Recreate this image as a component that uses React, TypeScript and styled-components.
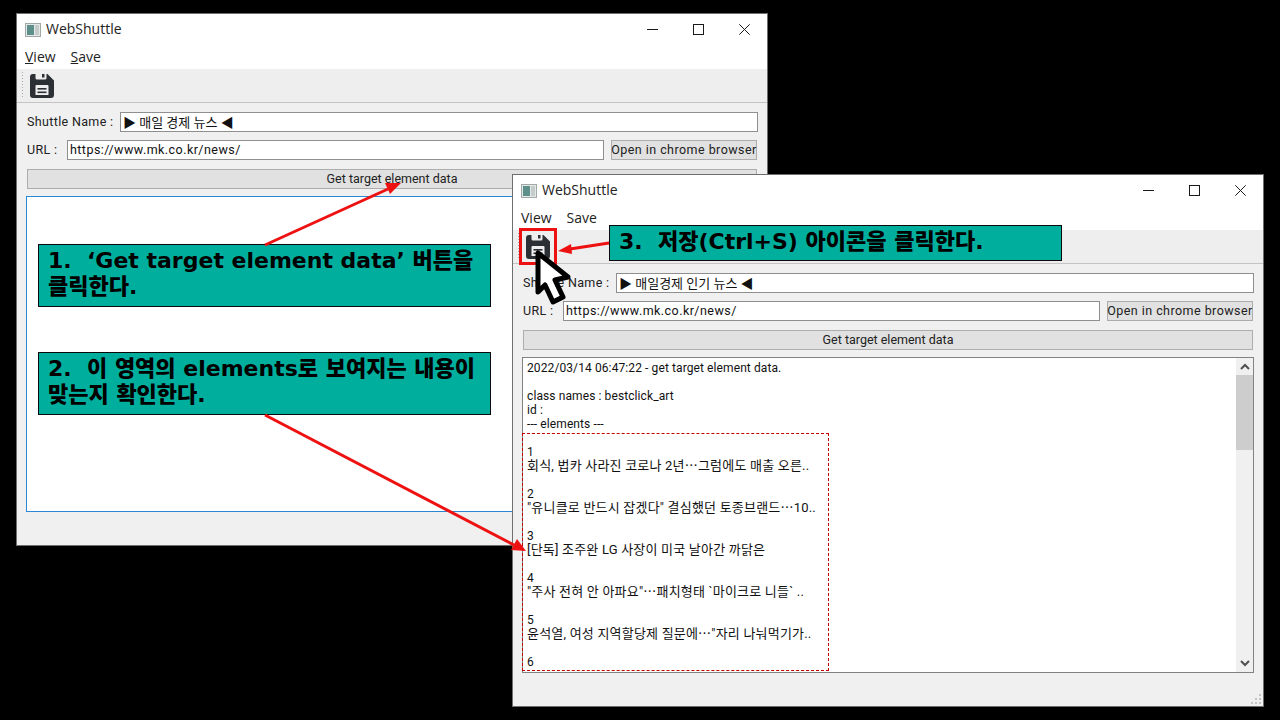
import React from "react";
import styled, { createGlobalStyle } from "styled-components";

const UI_FONT = `"Roboto", "Noto Sans CJK KR", sans-serif`;

const GlobalStyle = createGlobalStyle`
    html, body {
        margin: 0;
        width: 1280px;
        height: 720px;
        overflow: hidden;
        background: #000;
    }
`;

const LOG_LINES = [
    "2022/03/14 06:47:22 - get target element data.",
    "",
    "class names : bestclick_art",
    "id :",
    "--- elements ---",
    "",
    "1",
    "회식, 법카 사라진 코로나 2년⋯그럼에도 매출 오른..",
    "",
    "2",
    "\"유니클로 반드시 잡겠다\" 결심했던 토종브랜드⋯10..",
    "",
    "3",
    "[단독] 조주완 LG 사장이 미국 날아간 까닭은",
    "",
    "4",
    "\"주사 전혀 안 아파요\"⋯패치형태 `마이크로 니들` ..",
    "",
    "5",
    "윤석열, 여성 지역할당제 질문에⋯\"자리 나눠먹기가..",
    "",
    "6",
];

const AppIcon: React.FC = () => (
    <svg width="16" height="14" viewBox="0 0 16 14">
        <rect x="0.5" y="0.5" width="15" height="13" fill="#e6e8e8" stroke="#a0a8a8" />
        <rect x="2" y="2" width="7" height="10" fill="#5d8f8b" />
        <rect x="10" y="2" width="4" height="10" fill="#c4cccc" />
    </svg>
);

const SaveIcon: React.FC = () => (
    <svg width="24" height="24" viewBox="0 0 24 24">
        <path
            fill="#2c3034"
            fillRule="evenodd"
            d="M3 0H5.5V4A1.5 1.5 0 0 0 7 5.5H15A1.5 1.5 0 0 0 16.5 4V0H17.5L24 6.5V21A3 3 0 0 1 21 24H3A3 3 0 0 1 0 21V3A3 3 0 0 1 3 0ZM6.5 11A1 1 0 0 0 5.5 12V21H18.5V12A1 1 0 0 0 17.5 11Z"
        />
        <rect x="12" y="0" width="2.5" height="3.5" fill="#2c3034" />
        <rect x="7.5" y="14" width="9" height="1.6" fill="#2c3034" />
        <rect x="7.5" y="17.5" width="9" height="1.6" fill="#2c3034" />
    </svg>
);

const ControlIcon: React.FC<{ kind: "min" | "max" | "close" }> = ({ kind }) => (
    <svg width="11" height="11" viewBox="0 0 11 11" fill="none" stroke="#1a1a1a" strokeWidth="1">
        {kind === "min" && <path d="M0 5.5H11" />}
        {kind === "max" && <rect x="0.5" y="0.5" width="10" height="10" />}
        {kind === "close" && <path d="M0.3 0.3L10.7 10.7M10.7 0.3L0.3 10.7" />}
    </svg>
);

const Chevron: React.FC<{ up?: boolean }> = ({ up }) => (
    <svg width="10" height="7" viewBox="0 0 10 7" fill="none" stroke="#505050" strokeWidth="2">
        <path d={up ? "M1 6L5 2L9 6" : "M1 1L5 5L9 1"} />
    </svg>
);

const SizeGrip: React.FC = () => (
    <svg width="10" height="10" viewBox="0 0 10 10" fill="#c4c4c4">
        <rect x="8" y="0" width="2" height="2" />
        <rect x="4" y="4" width="2" height="2" />
        <rect x="8" y="4" width="2" height="2" />
        <rect x="0" y="8" width="2" height="2" />
        <rect x="4" y="8" width="2" height="2" />
        <rect x="8" y="8" width="2" height="2" />
    </svg>
);

interface WebShuttleProps {
    left: number;
    top: number;
    shuttleName: string;
    underlineMenu?: boolean;
    focused?: boolean;
    lines?: string[];
}

const hasHangul = (text: string) => /[가-힣]/.test(text);

const WebShuttleWindow: React.FC<WebShuttleProps> = ({
    left,
    top,
    shuttleName,
    underlineMenu,
    focused,
    lines,
}) => (
    <Window $left={left} $top={top}>
        <TitleBar>
            <AppIcon />
            <TitleText>WebShuttle</TitleText>
            <Controls>
                <ControlButton><ControlIcon kind="min" /></ControlButton>
                <ControlButton><ControlIcon kind="max" /></ControlButton>
                <ControlButton><ControlIcon kind="close" /></ControlButton>
            </Controls>
        </TitleBar>
        <MenuBar>
            <MenuItem $underline={underlineMenu}>View</MenuItem>
            <MenuItem $underline={underlineMenu}>Save</MenuItem>
        </MenuBar>
        <ToolBar>
            <Grip />
            <SaveIcon />
        </ToolBar>
        <Body>
            <FormRow>
                <FieldLabel $width={93}>Shuttle Name :</FieldLabel>
                <Field $hangul>{shuttleName}</Field>
            </FormRow>
            <FormRow>
                <FieldLabel $width={40}>URL :</FieldLabel>
                <Field>https://www.mk.co.kr/news/</Field>
                <SideButton>Open in chrome browser</SideButton>
            </FormRow>
            <WideButton>Get target element data</WideButton>
            <Output $focused={focused}>
                <OutputText>
                    {lines?.map((line, i) => (
                        <OutputLine key={i} $hangul={hasHangul(line)}>{line}</OutputLine>
                    ))}
                </OutputText>
                {lines && (
                    <ScrollBar>
                        <ScrollCap><Chevron up /></ScrollCap>
                        <ScrollThumb />
                        <ScrollTrack />
                        <ScrollCap><Chevron /></ScrollCap>
                    </ScrollBar>
                )}
            </Output>
        </Body>
        <StatusBar>
            <SizeGrip />
        </StatusBar>
    </Window>
);

const App: React.FC = () => (
    <>
        <GlobalStyle />
        <Desktop>
            <WebShuttleWindow left={17} top={14} shuttleName="▶ 매일 경제 뉴스 ◀" underlineMenu focused />
            <WebShuttleWindow left={513} top={175} shuttleName="▶ 매일경제 인기 뉴스 ◀" lines={LOG_LINES} />

            <Callout $left={38} $top={244} $height={63}>
                1. &nbsp;‘Get target element data’ 버튼을<br />클릭한다.
            </Callout>
            <Callout $left={38} $top={352} $height={63}>
                2. &nbsp;이 영역의 elements로 보여지는 내용이<br />맞는지 확인한다.
            </Callout>
            <Callout $left={609} $top={225} $height={36}>
                3. &nbsp;저장(Ctrl+S) 아이콘을 클릭한다.
            </Callout>

            <SaveHighlight />
            <ElementsHighlight />

            <ArrowLayer viewBox="0 0 1280 720">
                <g stroke="#ee1111" strokeWidth="3" fill="none">
                    <path d="M265 245L388 189" />
                    <path d="M265 415L514 545" />
                    <path d="M609 243L570 249" />
                </g>
                <g fill="#ee1111">
                    <path d="M401 183L385 183L390 194Z" />
                    <path d="M526 551L511 550L517 539Z" />
                    <path d="M558 251L571 244L572 254Z" />
                </g>
                <path
                    d="M538 253L538 292L545 285L553 302L563 297L555 280L568 277Z"
                    fill="#fff"
                    stroke="#000"
                    strokeWidth="5"
                    strokeLinejoin="round"
                />
            </ArrowLayer>
        </Desktop>
    </>
);

export default App;

const Desktop = styled.div`
    position: relative;
    width: 1280px;
    height: 720px;
    overflow: hidden;
    background: #000;
    font-family: ${UI_FONT};
`;

const Window = styled.div<{ $left: number; $top: number }>`
    position: absolute;
    left: ${(p) => p.$left}px;
    top: ${(p) => p.$top}px;
    width: 750px;
    height: 531px;
    display: flex;
    flex-direction: column;
    background: #f0f0f0;
    color: #1a1a1a;
    box-shadow: 0 0 0 1px #6e6e6e;
`;

const TitleBar = styled.div`
    height: 31px;
    flex: none;
    display: flex;
    align-items: center;
    gap: 5px;
    padding-left: 8px;
    background: #fff;
`;

const TitleText = styled.span`
    font-size: 14px;
    font-family: "Open Sans", sans-serif;
    color: #222;
    margin-top: -2px;
`;

const Controls = styled.div`
    margin-left: auto;
    display: flex;
`;

const ControlButton = styled.div`
    width: 46px;
    height: 31px;
    display: flex;
    align-items: center;
    justify-content: center;
`;

const MenuBar = styled.div`
    height: 24px;
    flex: none;
    display: flex;
    align-items: center;
    gap: 15px;
    padding: 0 0 2px 8px;
    box-sizing: border-box;
    background: #fff;
`;

const MenuItem = styled.span<{ $underline?: boolean }>`
    font-size: 14px;
    font-family: "Open Sans", sans-serif;
    color: #222;
    &::first-letter {
        text-decoration: ${(p) => (p.$underline ? "underline" : "none")};
    }
`;

const ToolBar = styled.div`
    height: 34px;
    flex: none;
    box-sizing: border-box;
    display: flex;
    align-items: center;
    gap: 7px;
    padding: 0 0 0 5px;
    background: #eeeeee;
    border-bottom: 1px solid #c4c4c4;
`;

const Grip = styled.div`
    width: 1px;
    height: 27px;
    background: repeating-linear-gradient(to bottom, #a8a8a8 0 1px, transparent 1px 3px);
`;

const Body = styled.div`
    flex: none;
    display: flex;
    flex-direction: column;
    padding: 9px 9px 0 9px;
`;

const FormRow = styled.div`
    height: 20px;
    display: flex;
    align-items: center;
    margin-bottom: 8px;
    padding-left: 1px;
`;

const FieldLabel = styled.span<{ $width: number }>`
    width: ${(p) => p.$width}px;
    flex: none;
    padding-bottom: 2px;
    font-size: 12.5px;
    letter-spacing: 0.35px;
    white-space: nowrap;
    color: #222;
`;

const Field = styled.div<{ $hangul?: boolean }>`
    flex: 1;
    height: 20px;
    box-sizing: border-box;
    display: flex;
    align-items: center;
    padding: 0 0 2px 2px;
    background: #fff;
    border: 1px solid #8f8f8f;
    font-size: ${(p) => (p.$hangul ? 13 : 12.5)}px;
    letter-spacing: ${(p) => (p.$hangul ? 0 : 0.45)}px;
    white-space: nowrap;
    color: #111;
`;

const SideButton = styled.div`
    width: 146px;
    height: 20px;
    flex: none;
    box-sizing: border-box;
    display: flex;
    align-items: center;
    justify-content: center;
    padding-bottom: 2px;
    background: #e1e1e1;
    border: 1px solid #adadad;
    font-size: 12.5px;
    letter-spacing: 0.45px;
    white-space: nowrap;
    color: #222;
    margin: 0 1px 0 7px;
`;

const WideButton = styled.div`
    height: 20px;
    margin: 1px 1px 0 1px;
    box-sizing: border-box;
    display: flex;
    align-items: center;
    justify-content: center;
    padding-bottom: 2px;
    background: #e1e1e1;
    border: 1px solid #adadad;
    font-size: 12.5px;
    color: #222;
`;

const Output = styled.div<{ $focused?: boolean }>`
    height: 316px;
    margin-top: 7px;
    box-sizing: border-box;
    display: flex;
    background: #fff;
    border: 1px solid ${(p) => (p.$focused ? "#2b86d4" : "#828282")};
`;

const OutputText = styled.div`
    flex: 1;
    min-width: 0;
    padding: 3px 4px 0;
    overflow: hidden;
`;

const OutputLine = styled.div<{ $hangul?: boolean }>`
    height: 14px;
    line-height: 14px;
    font-size: ${(p) => (p.$hangul ? 13 : 12)}px;
    letter-spacing: ${(p) => (p.$hangul ? 0.2 : 0.1)}px;
    white-space: pre;
    color: #111;
`;

const ScrollBar = styled.div`
    width: 17px;
    flex: none;
    display: flex;
    flex-direction: column;
    background: #f0f0f0;
`;

const ScrollCap = styled.div`
    height: 17px;
    flex: none;
    display: flex;
    align-items: center;
    justify-content: center;
`;

const ScrollThumb = styled.div`
    height: 75px;
    flex: none;
    background: #cdcdcd;
`;

const ScrollTrack = styled.div`
    flex: 1;
`;

const StatusBar = styled.div`
    flex: 1;
    display: flex;
    align-items: flex-end;
    justify-content: flex-end;
    padding: 0 2px 2px 0;
`;

const Callout = styled.div<{ $left: number; $top: number; $height: number }>`
    position: absolute;
    left: ${(p) => p.$left}px;
    top: ${(p) => p.$top}px;
    width: 453px;
    height: ${(p) => p.$height}px;
    box-sizing: border-box;
    padding: 3px 9px;
    background: #00ae9d;
    border: 1px solid #0a0a0a;
    font-family: "DejaVu Sans", "Noto Sans CJK KR", sans-serif;
    font-size: 22px;
    font-weight: 900;
    line-height: 26px;
    white-space: nowrap;
    color: #000;
`;

const SaveHighlight = styled.div`
    position: absolute;
    left: 519px;
    top: 228px;
    width: 38px;
    height: 37px;
    box-sizing: border-box;
    border: 3px solid #ee1111;
`;

const ElementsHighlight = styled.div`
    position: absolute;
    left: 522px;
    top: 433px;
    width: 307px;
    height: 238px;
    box-sizing: border-box;
    border: 1px dashed #c00000;
`;

const ArrowLayer = styled.svg`
    position: absolute;
    left: 0;
    top: 0;
    width: 1280px;
    height: 720px;
    pointer-events: none;
`;
